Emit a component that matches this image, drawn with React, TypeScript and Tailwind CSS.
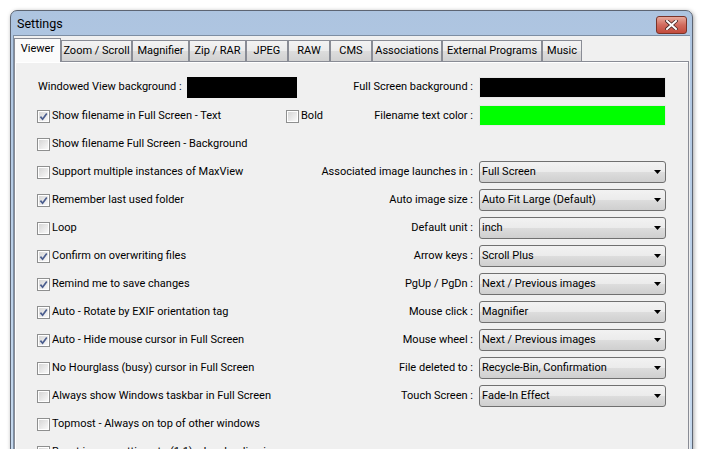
import type { ReactNode } from 'react';

type Row = {
  left?: { label: string; checked?: boolean };
  right?: { label: string; value: string };
};

const rows: Row[] = [
  { left: { label: 'Show filename Full Screen - Background' } },
  {
    left: { label: 'Support multiple instances of MaxView' },
    right: { label: 'Associated image launches in :', value: 'Full Screen' },
  },
  {
    left: { label: 'Remember last used folder', checked: true },
    right: { label: 'Auto image size :', value: 'Auto Fit Large (Default)' },
  },
  { left: { label: 'Loop' }, right: { label: 'Default unit :', value: 'inch' } },
  {
    left: { label: 'Confirm on overwriting files', checked: true },
    right: { label: 'Arrow keys :', value: 'Scroll Plus' },
  },
  {
    left: { label: 'Remind me to save changes', checked: true },
    right: { label: 'PgUp / PgDn :', value: 'Next / Previous images' },
  },
  {
    left: { label: 'Auto - Rotate by EXIF orientation tag', checked: true },
    right: { label: 'Mouse click :', value: 'Magnifier' },
  },
  {
    left: { label: 'Auto - Hide mouse cursor in Full Screen', checked: true },
    right: { label: 'Mouse wheel :', value: 'Next / Previous images' },
  },
  {
    left: { label: 'No Hourglass (busy) cursor in Full Screen' },
    right: { label: 'File deleted to :', value: 'Recycle-Bin, Confirmation' },
  },
  {
    left: { label: 'Always show Windows taskbar in Full Screen' },
    right: { label: 'Touch Screen :', value: 'Fade-In Effect' },
  },
  { left: { label: 'Topmost - Always on top of other windows' } },
  { left: { label: 'Reset image settings to (1:1) when loading images', checked: true } },
];

const tabs = [
  { name: 'Viewer', w: 'w-[47px]' },
  { name: 'Zoom / Scroll', w: 'w-[71px]' },
  { name: 'Magnifier', w: 'w-[57px]' },
  { name: 'Zip / RAR', w: 'w-[57px]' },
  { name: 'JPEG', w: 'w-[42px]' },
  { name: 'RAW', w: 'w-[42px]' },
  { name: 'CMS', w: 'w-[42px]' },
  { name: 'Associations', w: 'w-[70px]' },
  { name: 'External Programs', w: 'w-[100px]' },
  { name: 'Music', w: 'w-[40px]' },
];

function CheckBox({ checked }: { checked?: boolean }) {
  return (
    <span className="flex h-[13px] w-[13px] shrink-0 border border-[#8e8f8f] bg-white p-[1px]">
      <span className="flex flex-1 items-center justify-center bg-gradient-to-br from-[#d6d6d6] to-[#f9f9f9]">
        {checked && (
          <svg width="9" height="9" viewBox="0 0 9 9">
            <path d="M1.4 4.6 L3.6 7.2 L7.8 1.4" fill="none" stroke="#4a5d8e" strokeWidth="1.7" />
          </svg>
        )}
      </span>
    </span>
  );
}

function Check({ label, checked }: { label: string; checked?: boolean }) {
  return (
    <div className="flex items-center gap-[2px] whitespace-nowrap">
      <CheckBox checked={checked} />
      <span>{label}</span>
    </div>
  );
}

function Combo({ value }: { value: string }) {
  return (
    <div className="flex h-[22px] w-[187px] items-center justify-between rounded-[3px] border border-[#707070] bg-[linear-gradient(to_bottom,#f2f2f2_0%,#ebebeb_50%,#dddddd_50%,#cfcfcf_100%)] pl-[2px] pr-[4px]">
      <span>{value}</span>
      <svg width="7" height="4" viewBox="0 0 7 4">
        <polygon points="0,0 7,0 3.5,4" fill="#000" />
      </svg>
    </div>
  );
}

function RightCell({ label, children }: { label: string; children: ReactNode }) {
  return (
    <div className="flex items-center gap-[6px] whitespace-nowrap">
      <span className="text-right">{label}</span>
      {children}
    </div>
  );
}

export default function App() {
  return (
    <div className="h-[449px] w-[703px] overflow-hidden bg-white pl-[10px] pt-[10px] font-['Roboto',sans-serif] text-[11px] text-black">
      <div className="w-[683px] rounded-t-[7px] border border-[#5d6573] bg-gradient-to-b from-[#adc4e0] to-[#c6d9ee] px-[2px] shadow-[1px_1px_4px_rgba(0,0,0,0.35)]">
        <div className="flex h-[24px] items-start justify-between">
          <span className="pl-[4px] pt-[4px] text-[12.5px]">Settings</span>
          <div className="mr-[3px] mt-[5px] flex h-[18px] w-[31px] items-center justify-center rounded-[3px] border border-[#7a3328] bg-gradient-to-b from-[#e6a99c] via-[#d16b5e] to-[#c24a3c]">
            <svg width="13" height="10" viewBox="0 0 13 10">
              <path d="M2 1 L11 9 M11 1 L2 9" stroke="#4a2a26" strokeWidth="3.6" strokeLinecap="square" />
              <path d="M2 1 L11 9 M11 1 L2 9" stroke="#ffffff" strokeWidth="2" strokeLinecap="square" />
            </svg>
          </div>
        </div>

        <div className="h-[420px] border-l border-t border-[#7d8ea3] bg-[#f0f0f0] pr-[1px]">
          <div className="flex h-[25px] items-end pt-[2px]">
            {tabs.map((t, i) =>
              i === 0 ? (
                <div
                  key={t.name}
                  className={`${t.w} relative z-10 -mb-px flex h-[24px] shrink-0 items-center justify-center border border-b-0 border-[#898c95] bg-[#fbfbfb] pb-[2px]`}
                >
                  {t.name}
                </div>
              ) : (
                <div
                  key={t.name}
                  className={`${t.w} flex h-[21px] shrink-0 items-center justify-center border border-b-0 border-[#898c95] bg-[linear-gradient(to_bottom,#f3f3f3_0%,#ebebeb_50%,#dddddd_50%,#d1d1d1_100%)]`}
                >
                  {t.name}
                </div>
              ),
            )}
          </div>

          <div className="h-[400px] border border-[#898c95] bg-[#f0f0f0] pl-[22px] pr-[22px] pt-[11px] shadow-[inset_1px_1px_0_#ffffff]">
            <div className="flex h-[28px] items-center justify-between">
              <div className="flex items-center gap-[5px] whitespace-nowrap">
                <span className="pl-[1px]">Windowed View background :</span>
                <div className="h-[21px] w-[110px] bg-black" />
              </div>
              <RightCell label="Full Screen background :">
                <div className="h-[21px] w-[187px] border border-[#e8e8e8] bg-black" />
              </RightCell>
            </div>

            <div className="mt-[1px] flex h-[28px] items-center justify-between">
              <div className="flex items-center">
                <div className="w-[249px]">
                  <Check label="Show filename in Full Screen - Text" checked />
                </div>
                <Check label="Bold" />
              </div>
              <RightCell label="Filename text color :">
                <div className="-mt-[2px] h-[21px] w-[187px] border border-[#e8e8e8] bg-[#00ff00]" />
              </RightCell>
            </div>

            {rows.map((r, i) => (
              <div key={i} className="flex h-[28px] items-center justify-between">
                <div>{r.left && <Check label={r.left.label} checked={r.left.checked} />}</div>
                {r.right && (
                  <RightCell label={r.right.label}>
                    <Combo value={r.right.value} />
                  </RightCell>
                )}
              </div>
            ))}
          </div>
        </div>
      </div>
    </div>
  );
}
